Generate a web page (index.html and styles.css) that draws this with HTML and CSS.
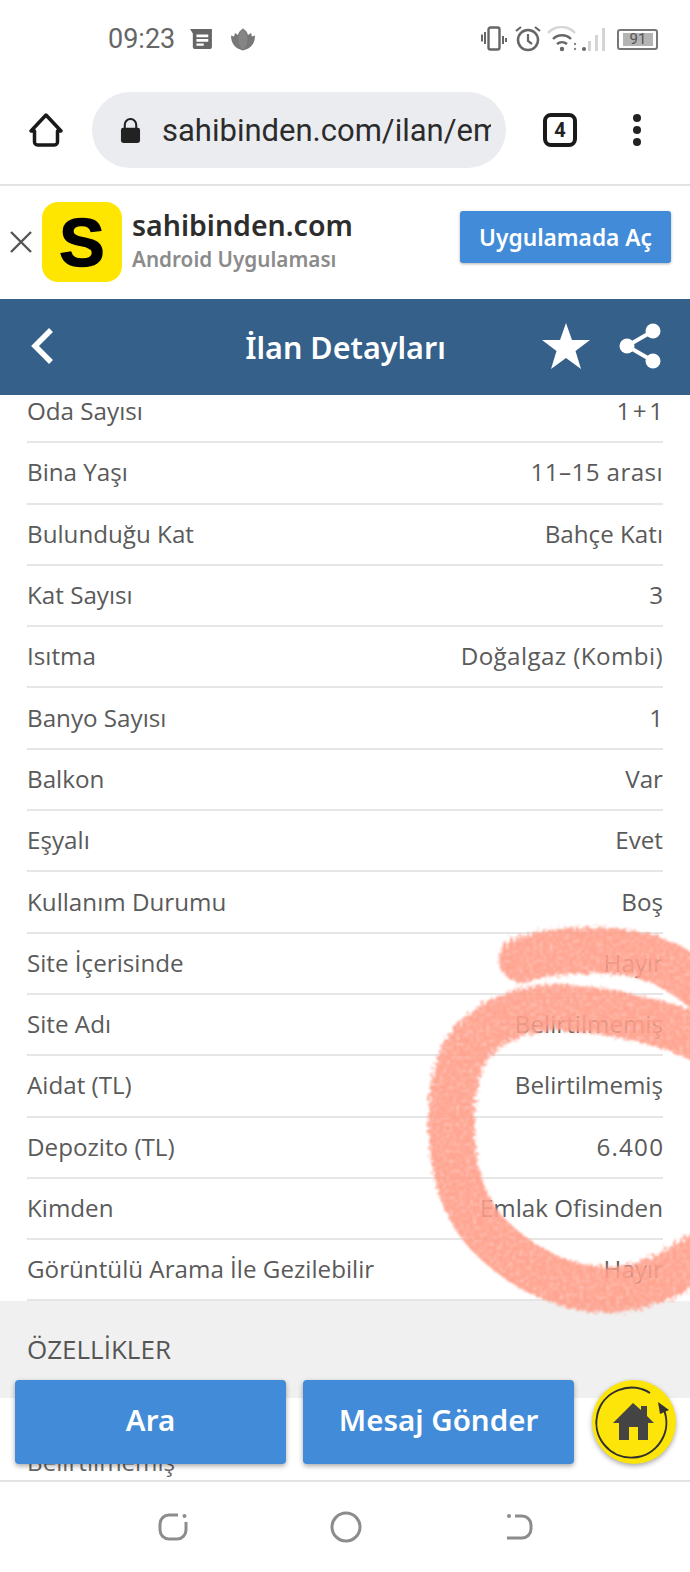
FILE: index.html
```html
<!DOCTYPE html>
<html lang="tr">

<head>
    <meta charset="UTF-8">
    <meta name="viewport" content="width=device-width, initial-scale=1.0">
    <title>İlan Detayları</title>
    <link rel="stylesheet" href="styles.css">
</head>

<body>
    <div class="phone">
        <div class="status">
            <span class="clock">09:23</span>
            <svg class="ic-news" viewBox="0 0 24 22"><path d="M0 0H24V20a2 2 0 0 1-2 2H5a2 2 0 0 1-2-2V5z" fill="#666"/><path d="M7 6h13v3H7zM7 11h13v3H7zM7 16h8v2.500H7z" fill="#fff"/></svg>
            <svg class="ic-leaf" viewBox="0 0 24 22"><path d="M12 0c3 2 4.500 4 5 6.500L20 4.500 21 8 24 7c0 8-4 13-12 15C4 20 0 15 0 7l3 1 1-3.500L7 6.500C7.500 4 9 2 12 0z" fill="#777"/><path d="M12 0c3 3 4.500 7 4.500 11S15 19 12 22C9 19 7.500 15 7.500 11S9 3 12 0z" fill="#858585"/></svg>
            <span class="status-gap"></span>
            <svg class="ic-vib" viewBox="0 0 26 26"><rect x="7.500" y="1.500" width="11" height="22" rx="2" fill="none" stroke="#666" stroke-width="2.400"/><path d="M1 8.500v7M4 6v12M22 10v8M25 12v4" stroke="#666" stroke-width="2" fill="none"/></svg>
            <svg class="ic-alarm" viewBox="0 0 28 28"><circle cx="14" cy="15" r="10" fill="none" stroke="#666" stroke-width="2.500"/><path d="M14 9v7l4 3M2 6l5-4M26 6l-5-4" fill="none" stroke="#666" stroke-width="2.200"/></svg>
            <svg class="ic-wifi" viewBox="0 0 62 26"><path d="M1 7c7-8 20-8 27 0" fill="none" stroke="#d6d6d6" stroke-width="2.400"/><path d="M6 13c5-5 13-5 18 0M10 18c3-2.500 7-2.500 10 0" fill="none" stroke="#666" stroke-width="2.400"/><circle cx="15" cy="23" r="2.200" fill="#666"/><circle cx="28" cy="18" r="1.200" fill="#888"/><circle cx="28" cy="23" r="1.200" fill="#888"/><circle cx="37" cy="23" r="2" fill="#666"/><rect x="41" y="15" width="3" height="10" fill="#d4d4d4"/><rect x="48" y="9" width="3" height="16" fill="#d4d4d4"/><rect x="55" y="2" width="3" height="23" fill="#d4d4d4"/></svg>
            <div class="batt"><span class="batt-fill">91</span></div>
        </div>

        <div class="toolbar">
            <svg class="ic-home" viewBox="0 0 36 36"><path d="M18 3 33 19H29.500V30a3 3 0 0 1-3 3H9.500a3 3 0 0 1-3-3V19H3z" fill="none" stroke="#1a1a1a" stroke-width="3.500" stroke-linejoin="round"/></svg>
            <div class="urlbar">
                <svg class="ic-lock" viewBox="0 0 22 26"><path d="M5 11V7a6 6 0 0 1 12 0v4" fill="none" stroke="#222" stroke-width="2.200"/><rect x="1" y="10" width="20" height="16" rx="2.500" fill="#222"/></svg>
                <span class="url">sahibinden.com/ilan/emlak</span>
            </div>
            <div class="tabs">4</div>
            <div class="menu-dots"><i></i><i></i><i></i></div>
        </div>

        <div class="banner">
            <svg class="ic-close" viewBox="0 0 22 22"><path d="M1 1 21 21M21 1 1 21" stroke="#555" stroke-width="2.400" fill="none"/></svg>
            <div class="app-logo">S</div>
            <div class="app-text">
                <div class="app-name">sahibinden.com</div>
                <div class="app-sub">Android Uygulaması</div>
            </div>
            <button class="open-btn">Uygulamada Aç</button>
        </div>

        <header class="head">
            <svg class="ic-back" viewBox="0 0 24 38"><path d="M21 3 5 19 21 35" fill="none" stroke="#fff" stroke-width="5.500"/></svg>
            <h1 class="title">İlan Detayları</h1>
            <svg class="ic-star" viewBox="0 0 48 46"><path d="M24 0 30 17H48L33.500 28 39 46 24 35 9 46 14.500 28 0 17H18z" fill="#fff"/></svg>
            <svg class="ic-share" viewBox="0 0 42 46"><path d="M34 8 8 23 34 38" fill="none" stroke="#fff" stroke-width="4"/><circle cx="34" cy="8" r="7.500" fill="#fff"/><circle cx="8" cy="23" r="7.500" fill="#fff"/><circle cx="34" cy="38" r="7.500" fill="#fff"/></svg>
        </header>

        <div class="content">
            <ul class="rows">
                <li><span>Oda Sayısı</span><span class="num num-wide">1+1</span></li>
                <li><span>Bina Yaşı</span><span class="wide">11–15 arası</span></li>
                <li><span>Bulunduğu Kat</span><span>Bahçe Katı</span></li>
                <li><span>Kat Sayısı</span><span>3</span></li>
                <li><span>Isıtma</span><span class="wide">Doğalgaz (Kombi)</span></li>
                <li><span>Banyo Sayısı</span><span>1</span></li>
                <li><span>Balkon</span><span>Var</span></li>
                <li><span>Eşyalı</span><span>Evet</span></li>
                <li><span>Kullanım Durumu</span><span>Boş</span></li>
                <li><span>Site İçerisinde</span><span>Hayır</span></li>
                <li><span>Site Adı</span><span>Belirtilmemiş</span></li>
                <li><span>Aidat (TL)</span><span>Belirtilmemiş</span></li>
                <li><span>Depozito (TL)</span><span class="num">6.400</span></li>
                <li><span>Kimden</span><span>Emlak Ofisinden</span></li>
                <li><span>Görüntülü Arama İle Gezilebilir</span><span>Hayır</span></li>
            </ul>
            <div class="section">ÖZELLİKLER</div>
            <div class="section-body">Belirtilmemiş</div>
        </div>

        <div class="nav">
            <svg class="nav-left" viewBox="0 0 30 28"><path d="M20 2H11a9 9 0 0 0-9 9v6a9 9 0 0 0 9 9h8a9 9 0 0 0 9-9V9" fill="none" stroke="#8c8c8c" stroke-width="3"/><circle cx="26.500" cy="3" r="2" fill="#8c8c8c"/></svg>
            <svg class="nav-mid" viewBox="0 0 32 32"><circle cx="16" cy="16" r="14" fill="none" stroke="#8c8c8c" stroke-width="3"/></svg>
            <svg class="nav-right" viewBox="0 0 28 28"><path d="M9 3h7a9 9 0 0 1 9 9v4a9 9 0 0 1-9 9H1" fill="none" stroke="#8c8c8c" stroke-width="3"/><circle cx="3" cy="3" r="2" fill="#8c8c8c"/></svg>
        </div>

        <!-- on ustteki butonlar -->
        <div class="actions">
            <button class="action-btn">Ara</button>
            <button class="action-btn">Mesaj Gönder</button>
            <div class="fab">
                <svg viewBox="0 0 84 84"><path d="M72 30A35 35 0 1 1 58 13" fill="none" stroke="#2f2f2f" stroke-width="2"/><path d="M66 22 77 30 68 34z" fill="#333"/><path d="M41 23 49 30V26H55V36L62 43H56V60H46V47H37V60H27V43H21z" fill="#444"/></svg>
            </div>
        </div>

        <!-- ekran goruntusu uzerindeki isaret -->
        <svg class="scribble" viewBox="0 0 690 1572">
            <defs>
                <filter id="rough" x="-10%" y="-10%" width="120%" height="120%">
                    <feTurbulence type="fractalNoise" baseFrequency="0.3" numOctaves="3" seed="4" result="noise"/>
                    <feDisplacementMap in="SourceGraphic" in2="noise" scale="12" result="moved"/>
                    <feColorMatrix in="noise" type="matrix" values="0 0 0 0 0  0 0 0 0 0  0 0 0 0 0  1.200 0 0 0 0.350" result="speck"/>
                    <feComposite in="moved" in2="speck" operator="in"/>
                    <feGaussianBlur stdDeviation="1.300"/>
                </filter>
            </defs>
            <g fill="none" stroke="#ffa08c" stroke-width="46" stroke-linecap="round" stroke-linejoin="round" filter="url(#rough)" opacity="0.97">
                <path d="M522 960C545 951 600 946 640 955 665 961 685 974 710 994"/>
                <path d="M710 1044C680 1026 620 1012 570 1008 530 1005 495 1017 472 1042 452 1068 450 1105 452 1140 455 1185 470 1220 497 1243 530 1273 570 1290 610 1290 645 1288 675 1274 710 1248"/>
            </g>
        </svg>
    </div>
</body>

</html>
```

FILE: styles.css
```css
* {
    box-sizing: border-box;
}

body {
    margin: 0;
    background: #fff;
    font-family: "Open Sans", sans-serif;
}

.phone {
    position: relative;
    width: 690px;
    height: 1572px;
    overflow: hidden;
    display: flex;
    flex-direction: column;
}

svg {
    display: block;
    flex: none;
}

/* status bar */
.status {
    height: 78px;
    display: flex;
    align-items: center;
    padding-left: 108px;
    padding-right: 32px;
    color: #666;
}

.clock {
    font-family: Roboto, sans-serif;
    font-size: 27px;
}

.ic-news {
    width: 24px;
    height: 20px;
    margin-left: 14px;
}

.ic-leaf {
    width: 24px;
    height: 23px;
    margin-left: 18px;
}

.status-gap {
    flex: 1;
}

.ic-vib {
    width: 26px;
    height: 26px;
}

.ic-alarm {
    width: 28px;
    height: 28px;
    margin-left: 7px;
}

.ic-wifi {
    width: 62px;
    height: 26px;
    margin-left: 5px;
}

.batt {
    width: 41px;
    height: 21px;
    margin-left: 8px;
    padding: 2px 3px 2px 4px;
    border: 2px solid #777;
    border-radius: 3px;
}

.batt-fill {
    display: block;
    height: 100%;
    background: #b4b4b4;
    color: #555;
    font-family: Roboto, sans-serif;
    font-size: 15px;
    line-height: 13px;
    text-align: center;
}

/* chrome toolbar */
.toolbar {
    height: 108px;
    display: flex;
    align-items: center;
    padding-left: 28px;
    padding-bottom: 2px;
    border-bottom: 2px solid #e3e3e3;
}

.ic-home {
    width: 36px;
    height: 36px;
}

.urlbar {
    width: 414px;
    height: 76px;
    margin-left: 28px;
    padding: 0 15px 0 28px;
    display: flex;
    align-items: center;
    background: #ebecf0;
    border-radius: 38px;
    overflow: hidden;
}

.ic-lock {
    width: 21px;
    height: 25px;
}

.url {
    margin-left: 21px;
    font-family: Roboto, sans-serif;
    font-size: 31px;
    color: #2b2b2b;
    white-space: nowrap;
    overflow: hidden;
}

.tabs {
    width: 34px;
    height: 34px;
    margin-left: 37px;
    border: 4px solid #1a1a1a;
    border-radius: 8px;
    font-family: Roboto, sans-serif;
    font-weight: 700;
    font-size: 20px;
    line-height: 26px;
    text-align: center;
    color: #222;
}

.menu-dots {
    margin-left: 56px;
    display: flex;
    flex-direction: column;
    gap: 4px;
}

.menu-dots i {
    width: 8px;
    height: 8px;
    border-radius: 50%;
    background: #222;
}

/* app banner */
.banner {
    height: 113px;
    display: flex;
    align-items: center;
    padding-left: 10px;
    padding-bottom: 1px;
}

.ic-close {
    width: 22px;
    height: 22px;
}

.app-logo {
    width: 80px;
    height: 80px;
    margin-left: 10px;
    background: #ffe600;
    border-radius: 16px;
    font-family: "Liberation Sans", sans-serif;
    font-weight: 700;
    font-size: 68px;
    line-height: 80px;
    text-align: center;
    color: #000;
    -webkit-text-stroke: 1.500px #000;
}

.app-text {
    margin-top: -3px;
    margin-left: 10px;
    width: 328px;
}

.app-name {
    font-family: "Noto Sans", sans-serif;
    font-weight: 600;
    font-size: 28.500px;
    line-height: 38px;
    color: #2d2d2d;
}

.app-sub {
    font-family: "Noto Sans", sans-serif;
    font-weight: 600;
    font-size: 20.700px;
    line-height: 31px;
    color: #8b8b8b;
}

.open-btn {
    align-self: flex-start;
    width: 211px;
    height: 52px;
    margin-top: 25px;
    padding: 0;
    border: none;
    border-radius: 3px;
    background: #428bd8;
    box-shadow: 0 1px 3px rgba(0, 0, 0, 0.3);
    color: #fff;
    font-family: "Noto Sans", sans-serif;
    font-weight: 600;
    font-size: 22.700px;
}

/* blue header */
.head {
    position: relative;
    z-index: 1;
    height: 96px;
    display: flex;
    align-items: center;
    padding-left: 30px;
    background: #346089;
    color: #fff;
}

.ic-back {
    width: 24px;
    height: 38px;
    margin-bottom: 2px;
}

.title {
    width: 488px;
    margin: 0;
    padding-left: 95px;
    font-family: "Noto Sans", sans-serif;
    font-weight: 600;
    font-size: 30.500px;
    text-align: center;
}

.ic-star {
    width: 48px;
    height: 46px;
    margin-bottom: 2px;
}

.ic-share {
    width: 42px;
    height: 46px;
    margin-left: 29px;
    margin-bottom: 2px;
}

/* detail list */
.content {
    flex: 1;
    min-height: 0;
    overflow: hidden;
}

.rows {
    list-style: none;
    margin: -13px 27px 0;
    padding: 0;
}

.rows li {
    height: 61.300px;
    padding-bottom: 2px;
    display: flex;
    justify-content: space-between;
    align-items: center;
    border-bottom: 2px solid #e6e6e6;
    font-size: 24.200px;
    color: #5a5a5a;
}

.num {
    letter-spacing: 1.200px;
    margin-right: -1.200px;
}

.num-wide {
    letter-spacing: 2.500px;
    margin-right: -2.500px;
}

.wide {
    letter-spacing: 0.400px;
}

.section {
    height: 97px;
    padding: 31px 27px 0;
    background: #f0f0f0;
    font-size: 26px;
    line-height: 34px;
    color: #555;
}

.section-body {
    padding: 47px 27px 0;
    font-size: 24.200px;
    line-height: 34px;
    color: #666;
}

/* android nav */
.nav {
    height: 92px;
    display: flex;
    align-items: center;
    gap: 142px;
    padding-left: 158px;
    border-top: 2px solid #e3e3e3;
    background: #fff;
}

.nav-left {
    width: 30px;
    height: 28px;
}

.nav-mid {
    width: 32px;
    height: 32px;
}

.nav-right {
    width: 28px;
    height: 28px;
    margin-left: 2px;
}

/* floating */
.actions {
    position: absolute;
    left: 15px;
    top: 1380px;
    display: flex;
    z-index: 2;
}

.action-btn {
    width: 271px;
    height: 84px;
    margin-right: 17px;
    padding: 0 0 6px;
    border: none;
    border-radius: 4px;
    background: #428bd8;
    box-shadow: 0 2px 5px rgba(0, 0, 0, 0.35);
    color: #fff;
    font-family: "Noto Sans", sans-serif;
    font-weight: 600;
    font-size: 29.500px;
}

.fab {
    width: 84px;
    height: 84px;
    margin-left: 1px;
    background: #fde50a;
    border-radius: 50%;
    box-shadow: 0 2px 5px rgba(0, 0, 0, 0.35);
}

.scribble {
    position: absolute;
    left: 0;
    top: 0;
    width: 690px;
    height: 1572px;
    z-index: 3;
    pointer-events: none;
}
```
